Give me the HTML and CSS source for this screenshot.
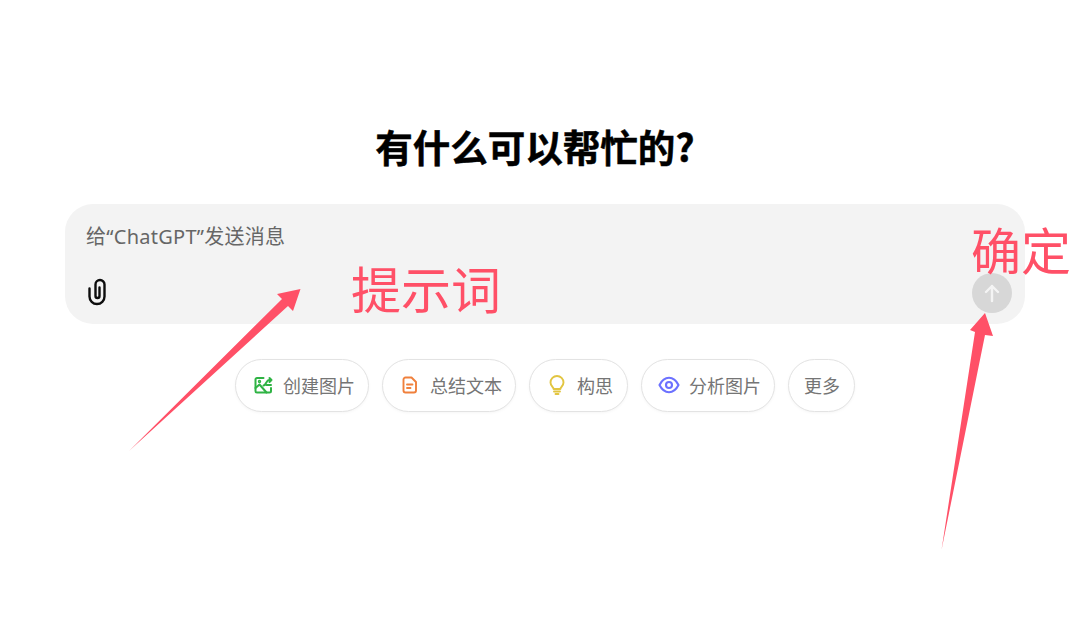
FILE: index.html
```html
<!DOCTYPE html>
<html lang="zh-CN">
<head>
<meta charset="utf-8">
<title>ChatGPT</title>
<link rel="stylesheet" href="styles.css">
</head>
<body>
<main class="page">
  <h1 class="title">有什么可以帮忙的?</h1>
  <section class="composer">
    <div class="prompt">给“ChatGPT”发送消息</div>
    <div class="tools">
      <svg class="clip" viewBox="0 0 24 30" width="24" height="30" fill="none" stroke="#0d0d0d" stroke-width="2.400" stroke-linecap="round" stroke-linejoin="round"><path d="M3.500 10.500V18.500a7.500 7.500 0 0 0 15 0V6.500a4.500 4.500 0 0 0-9 0V18a2 2 0 0 0 4 0V9.500"/></svg>
      <button class="send"><svg viewBox="0 0 20 20" width="20" height="20" fill="none" stroke="#f4f4f4" stroke-width="2.400" stroke-linecap="round" stroke-linejoin="round"><path d="M10 18V3M4 9l6-6 6 6"/></svg></button>
    </div>
  </section>
  <nav class="chips">
    <button class="chip"><svg viewBox="0 0 20 20" width="20" height="20" fill="none" stroke="#2fb344" stroke-width="2" stroke-linecap="round" stroke-linejoin="round"><path d="M10.500 3H4a1.500 1.500 0 0 0-1.500 1.500V16A1.500 1.500 0 0 0 4 17.500h12.500A1.500 1.500 0 0 0 18 16v-3"/><path d="M2.500 13 6.500 9.500l7 8"/><circle cx="6.500" cy="6.500" r=".7"/><path d="M10.500 10.500C13 10 13.500 5 16 5h2.500M16.500 3 18.500 5l-2 2M13.500 10h4.500"/></svg><span>创建图片</span></button>
    <button class="chip"><svg viewBox="0 0 20 20" width="20" height="20" fill="none" stroke="#f0803c" stroke-width="1.900" stroke-linecap="round" stroke-linejoin="round"><path d="M5.500 2.500h6L16 7v8.500a2 2 0 0 1-2 2H5.500a2 2 0 0 1-2-2v-11a2 2 0 0 1 2-2Z"/><path d="M7 9.500h5.500M7 13h3.500"/></svg><span>总结文本</span></button>
    <button class="chip chip-short"><svg viewBox="0 0 20 20" width="20" height="20" fill="none" stroke="#e2c541" stroke-width="1.900" stroke-linecap="round" stroke-linejoin="round"><path d="M6.600 14c0-1.700-3.100-3-3.100-6.500a6.500 6.500 0 0 1 13 0c0 3.500-3.100 4.800-3.100 6.500Z"/><path d="M7 16.500h6M8.500 19h3"/></svg><span>构思</span></button>
    <button class="chip chip-eye"><svg viewBox="0 0 22 20" width="22" height="20" fill="none" stroke="#6c71ff" stroke-width="2.100" stroke-linecap="round" stroke-linejoin="round"><path d="M1.500 10C4 5 7.200 2.800 11 2.800S18 5 20.500 10C18 15 14.800 17.200 11 17.200S4 15 1.500 10Z"/><circle cx="11" cy="10" r="3"/></svg><span>分析图片</span></button>
    <button class="chip chip-plain"><span>更多</span></button>
  </nav>
</main>

<svg class="arrows" viewBox="0 0 1070 635" width="1070" height="635">
  <path d="M129 451 282 299 277 294 300.500 289 293 311 288 306Z"/>
  <path d="M941.500 550 975 332 970 330 985 313 993 336 985 335Z"/>
</svg>
<div class="note note-prompt">提示词</div>
<div class="note note-send">确定</div>
</body>
</html>
```

FILE: styles.css
```css
* { box-sizing: border-box; }
html, body { margin: 0; padding: 0; background: #fff; }
body {
  width: 1070px;
  height: 635px;
  overflow: hidden;
  position: relative;
  font-family: "Noto Sans CJK SC", "Noto Sans", sans-serif;
}
.page {
  width: 960px;
  margin-left: 65px;
  padding-top: 119px;
  display: flex;
  flex-direction: column;
  align-items: center;
}
.title {
  margin: 0 20px 0 0;
  height: 85px;
  font-size: 37.500px;
  line-height: 54px;
  font-weight: 700;
  -webkit-text-stroke: .5px #000;
  color: #000;
}
.composer {
  width: 960px;
  height: 120px;
  background: #f3f3f3;
  border-radius: 28px;
  padding: 20px 13px 11px 21px;
  display: flex;
  flex-direction: column;
  justify-content: space-between;
}
.prompt {
  font-family: "Noto Sans", "Noto Sans CJK SC", sans-serif;
  font-size: 20px;
  letter-spacing: .27px;
  line-height: 26px;
  color: #666;
}
.tools {
  display: flex;
  justify-content: space-between;
  align-items: center;
}
.clip { display: block; }
.send {
  width: 40px;
  height: 40px;
  padding: 0;
  border: 0;
  border-radius: 50%;
  background: #d7d7d7;
  display: flex;
  align-items: center;
  justify-content: center;
}
.chips {
  display: flex;
  justify-content: center;
  gap: 13px;
  margin-top: 35px;
}
.chip {
  height: 53px;
  padding: 0 13px 2px 17px;
  background: #fff;
  border: 1px solid #e3e3e3;
  border-radius: 27px;
  box-shadow: 0 1px 3px rgba(0, 0, 0, .04);
  display: flex;
  align-items: center;
  gap: 10px;
  font-family: inherit;
  font-size: 18px;
  line-height: 24px;
  color: #757575;
}
.chip-short { padding-right: 14px; }
.chip-eye { padding-left: 16px; gap: 9px; }
.chip-plain { padding: 0 14px 2px 15px; }
.arrows { position: absolute; left: 0; top: 0; pointer-events: none; }
.arrows path { fill: #ff5067; }
.note {
  position: absolute;
  color: #ff5067;
  font-size: 50px;
  line-height: 60px;
  white-space: nowrap;
}
.note-prompt { left: 351px; top: 257px; }
.note-send { left: 971px; top: 218px; }
```
